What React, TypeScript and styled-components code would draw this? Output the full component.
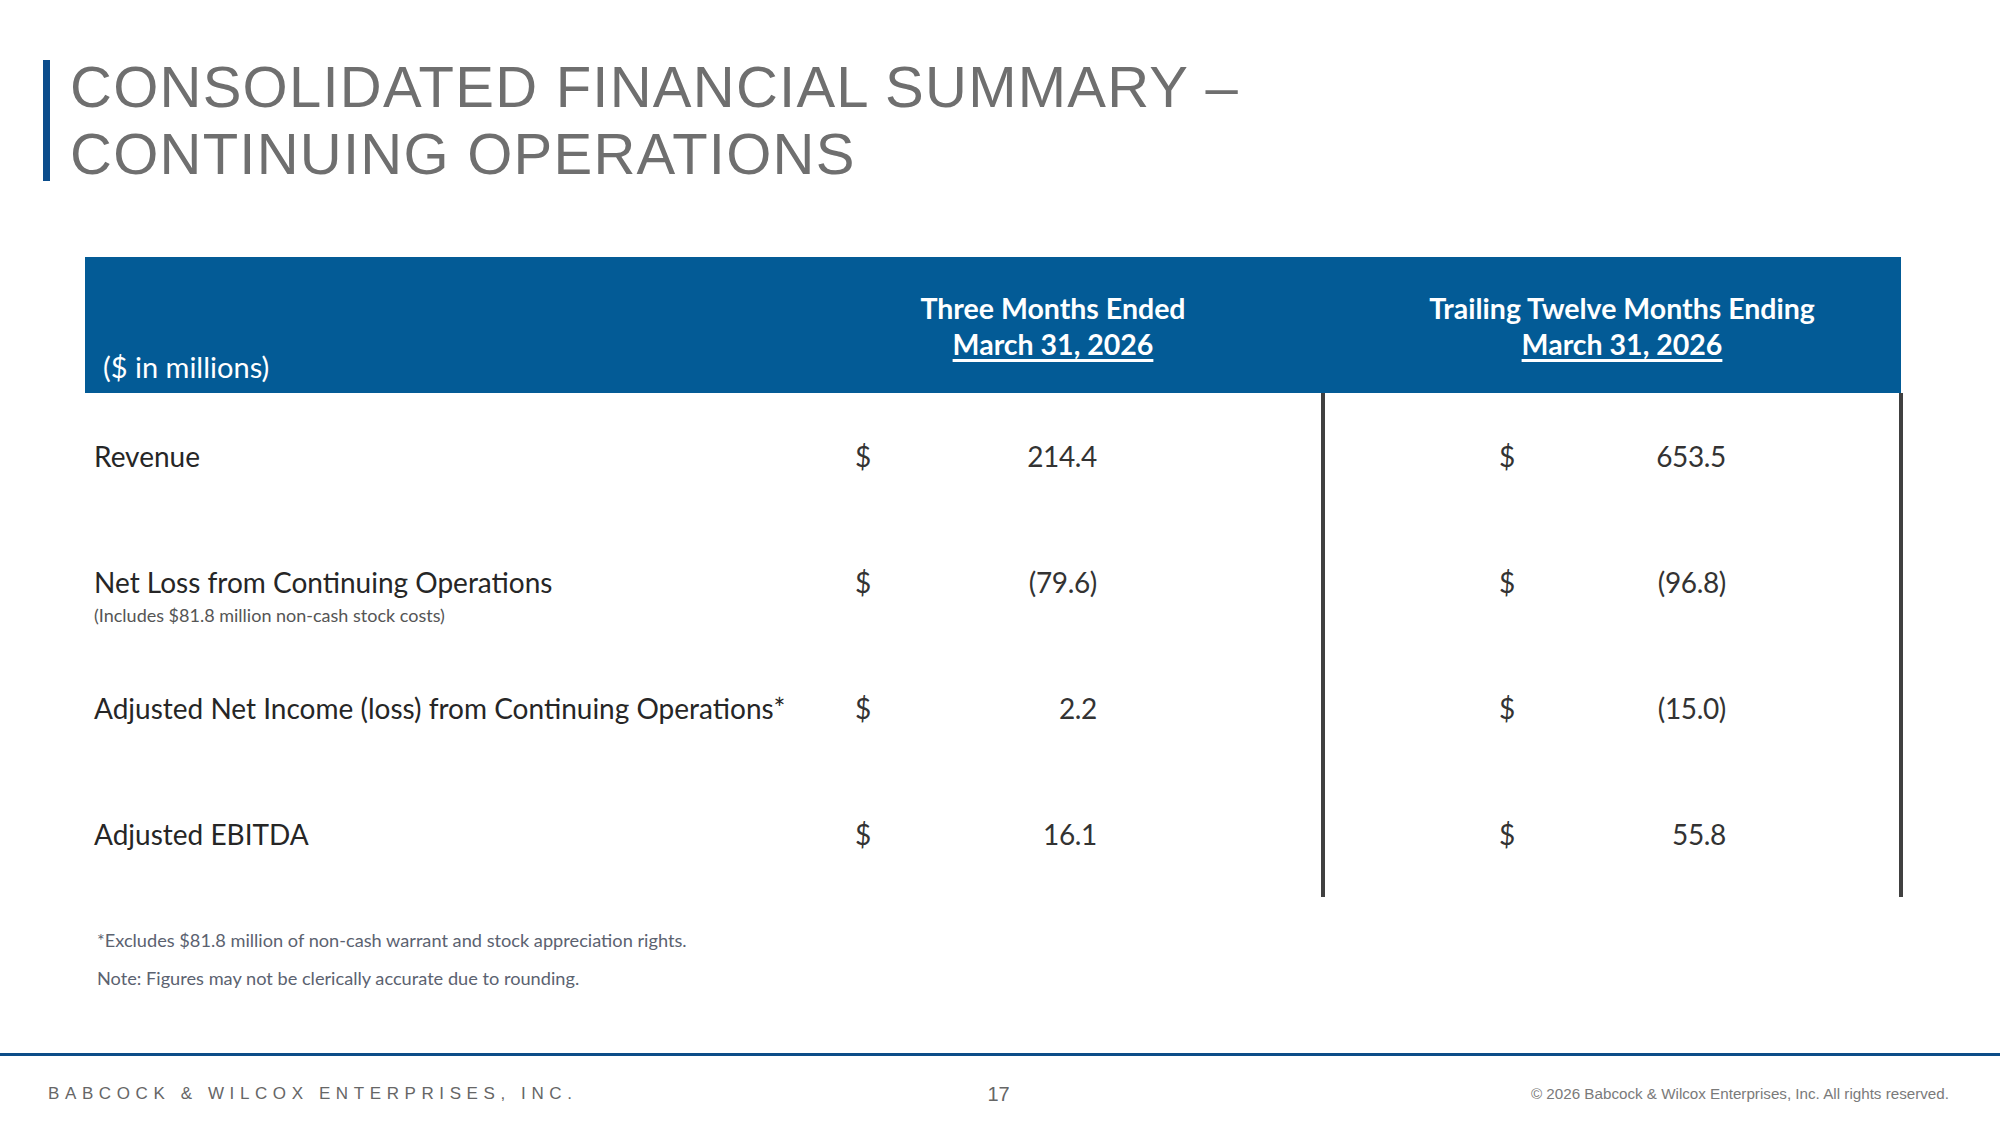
import React from "react";
import styled, { createGlobalStyle } from "styled-components";

const Global = createGlobalStyle`
  html, body { margin: 0; padding: 0; background: #ffffff; }
  body {
    width: 2000px;
    height: 1125px;
    overflow: hidden;
    font-family: Lato, "Open Sans", "Liberation Sans", sans-serif;
  }
  * { box-sizing: border-box; }
`;

const Page = styled.div`
  width: 2000px;
  height: 1125px;
  display: flex;
  flex-direction: column;
  background: #ffffff;
`;

const TitleBlock = styled.header`
  display: flex;
  align-items: flex-start;
  padding: 53px 0 0 43px;
`;

const AccentBar = styled.div`
  width: 7px;
  height: 121px;
  margin-top: 7px;
  background: #0b4d8c;
  flex: none;
`;

const Title = styled.h1`
  margin: 0 0 0 20px;
  font-family: "Liberation Sans", Arial, sans-serif;
  font-weight: 400;
  font-size: 58px;
  line-height: 67px;
  letter-spacing: 1.25px;
  color: #6f6f6f;
`;

const Table = styled.section`
  margin: 70px 0 0 85px;
  width: 1818px;
  display: flex;
  flex-direction: column;
`;

const HeaderRow = styled.div`
  display: grid;
  grid-template-columns: 700px 536px 580px;
  height: 136px;
  background: #035b96;
  color: #ffffff;
  width: 1816px;
`;

const HeaderLabel = styled.div`
  align-self: end;
  padding: 0 0 8px 18px;
  font-size: 29px;
  line-height: 36px;
`;

const HeaderCol = styled.div<{ $shift?: number }>`
  padding-top: 33px;
  padding-left: ${(p) => (p.$shift ?? 0) * 2}px;
  text-align: center;
  font-weight: 700;
  font-size: 28.5px;
  line-height: 36px;
`;

const HeaderDate = styled.span`
  display: inline-block;
  text-decoration: underline;
  text-decoration-thickness: 3px;
  text-underline-offset: 4px;
`;

const Body = styled.div`
  display: grid;
  grid-template-columns: 700px 536px 582px;
  grid-auto-rows: 126px;
`;

const LabelCell = styled.div`
  padding: 46px 0 0 9px;
  white-space: nowrap;
  color: #262626;
  font-size: 28px;
  line-height: 34px;
`;

const SubNote = styled.div`
  margin-top: 5px;
  font-size: 18px;
  line-height: 22px;
  color: #555555;
`;

const ValueCell = styled.div<{ $left: number; $right: number; $framed?: boolean }>`
  display: flex;
  align-items: flex-start;
  padding: 46px ${(p) => p.$right}px 0 ${(p) => p.$left}px;
  color: #333333;
  font-size: 28px;
  line-height: 34px;
  letter-spacing: -0.35px;
  ${(p) =>
    p.$framed
      ? `border-left: 4px solid #404040; border-right: 4px solid #404040;`
      : ""}
`;

const Dollar = styled.span`
  flex: none;
`;

const Amount = styled.span`
  margin-left: auto;
`;

const Notes = styled.div`
  margin: 31px 0 0 97px;
  display: flex;
  flex-direction: column;
  gap: 14px;
  color: #5b6270;
  font-size: 18.2px;
  line-height: 24px;
`;

const Footer = styled.footer`
  margin-top: auto;
  height: 72px;
  border-top: 3px solid #0c4d88;
  display: grid;
  grid-template-columns: 1fr auto 1fr;
  align-items: start;
  padding: 23px 51px 0 48px;
  line-height: 30px;
  color: #666666;
`;

const Company = styled.span`
  justify-self: start;
  font-family: "Liberation Sans", Arial, sans-serif;
  font-size: 17px;
  letter-spacing: 5.6px;
`;

const PageNo = styled.span`
  font-family: "Liberation Sans", Arial, sans-serif;
  font-size: 20px;
`;

const Copy = styled.span`
  justify-self: end;
  font-family: "Liberation Sans", Arial, sans-serif;
  font-size: 15.2px;
  color: #7a7a7a;
`;

type Row = { label: string; note?: string; q: string; ttm: string };

const rows: Row[] = [
  { label: "Revenue", q: "214.4", ttm: "653.5" },
  {
    label: "Net Loss from Continuing Operations",
    note: "(Includes $81.8 million non-cash stock costs)",
    q: "(79.6)",
    ttm: "(96.8)",
  },
  { label: "Adjusted Net Income (loss) from Continuing Operations*", q: "2.2", ttm: "(15.0)" },
  { label: "Adjusted EBITDA", q: "16.1", ttm: "55.8" },
];

export default function App() {
  return (
    <Page>
      <Global />
      <TitleBlock>
        <AccentBar />
        <Title>
          CONSOLIDATED FINANCIAL SUMMARY –
          <br />
          CONTINUING OPERATIONS
        </Title>
      </TitleBlock>

      <Table>
        <HeaderRow>
          <HeaderLabel>($ in millions)</HeaderLabel>
          <HeaderCol>
            Three Months Ended
            <br />
            <HeaderDate>March 31, 2026</HeaderDate>
          </HeaderCol>
          <HeaderCol $shift={11}>
            Trailing Twelve Months Ending
            <br />
            <HeaderDate>March 31, 2026</HeaderDate>
          </HeaderCol>
        </HeaderRow>
        <Body>
          {rows.map((r) => (
            <React.Fragment key={r.label}>
              <LabelCell>
                {r.label}
                {r.note && <SubNote>{r.note}</SubNote>}
              </LabelCell>
              <ValueCell $left={70} $right={224}>
                <Dollar>$</Dollar>
                <Amount>{r.q}</Amount>
              </ValueCell>
              <ValueCell $left={174} $right={173} $framed>
                <Dollar>$</Dollar>
                <Amount>{r.ttm}</Amount>
              </ValueCell>
            </React.Fragment>
          ))}
        </Body>
      </Table>

      <Notes>
        <span>*Excludes $81.8 million of non-cash warrant and stock appreciation rights.</span>
        <span>Note: Figures may not be clerically accurate due to rounding.</span>
      </Notes>

      <Footer>
        <Company>BABCOCK &amp; WILCOX ENTERPRISES, INC.</Company>
        <PageNo>17</PageNo>
        <Copy>© 2026 Babcock &amp; Wilcox Enterprises, Inc. All rights reserved.</Copy>
      </Footer>
    </Page>
  );
}
